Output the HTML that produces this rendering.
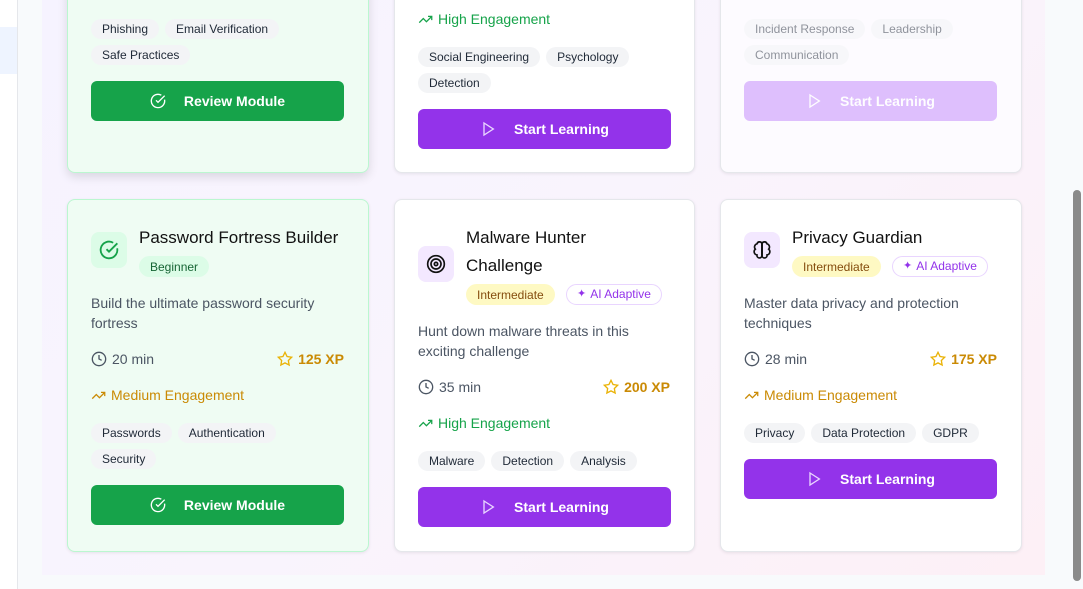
<!DOCTYPE html>
<html><head><meta charset="utf-8"><style>
*{box-sizing:border-box;margin:0;padding:0}
body{width:1083px;height:589px;overflow:hidden;background:#f8fafc;font-family:"Liberation Sans",sans-serif;position:relative;color:#111827}
.abs{position:absolute}
.side{left:0;top:0;width:18px;height:589px;background:#fff;border-right:1px solid #e5e7eb}
.wrap{left:42px;top:-20px;width:1003px;height:595px;background:linear-gradient(135deg,#f6f3ff 0%,#f9f4fd 50%,#fdf0f6 100%)}
.card{position:absolute;background:#fff;border:1px solid #e5e7eb;border-radius:8px;box-shadow:0 1px 3px rgba(0,0,0,.08)}
.green{background:#effcf3;border-color:#bbf7d0}
.t{position:absolute;white-space:nowrap;line-height:20px}
.title{font-size:17px;font-weight:500;color:#111;line-height:28px}
.desc{font-size:14px;color:#4b5563;line-height:20px;white-space:normal}
.meta{font-size:14px;color:#4b5563;display:flex;align-items:center;gap:5px}
.xp{font-size:14px;color:#ca8a04;font-weight:700;display:flex;align-items:center;gap:5px}
.eng{font-size:14px;display:flex;align-items:center;gap:5px}
.tags{position:absolute;display:flex;flex-wrap:wrap;gap:6px;width:253px}
.tag{font-size:12px;background:#f3f4f6;color:#1f2937;height:20px;line-height:21px;padding:0 11px;border-radius:10px;font-weight:500}
.btn{position:absolute;width:253px;height:40px;border-radius:6px;color:#fff;font-size:14px;font-weight:700;display:flex;align-items:center;justify-content:center;gap:18px}
.gbtn{background:#16a34a}.pbtn{background:#9333ea}
.badge{position:absolute;font-size:12px;height:21px;line-height:22px;border-radius:11px;padding:0 11px;white-space:nowrap}
.beg{background:#dcfce7;color:#166534}
.int{background:#fef9c3;color:#854d0e}
.ai{background:#fff;border:1px solid #e9d5ff;color:#9333ea;display:flex;align-items:center;gap:4px;line-height:19px;padding:0 10px}
.ico{position:absolute;width:36px;height:36px;border-radius:8px;display:flex;align-items:center;justify-content:center}
</style></head><body>
<div class="abs side"><div class="abs" style="left:0;top:27px;width:17px;height:47px;background:#eef4ff"></div></div>
<div class="abs wrap"></div>

<!-- Row 1 -->
<div class="card green" style="left:67px;top:-20px;width:302px;height:193px;box-shadow:0 4px 10px rgba(0,0,0,.12)"></div>
<div class="tags" style="left:91px;top:19px"><span class="tag">Phishing</span><span class="tag">Email Verification</span><span class="tag">Safe Practices</span></div>
<div class="btn gbtn" style="left:91px;top:81px"><svg width="16" height="16" viewBox="0 0 24 24" fill="none" stroke="#fff" stroke-width="2"><path d="M21.8 10A10 10 0 1 1 17 3.3"/><path d="M9 11l3 3L22 4"/></svg>Review Module</div>

<div class="card" style="left:394px;top:-20px;width:301px;height:193px"></div>
<div class="t eng" style="left:418px;top:9px;color:#16a34a"><svg width="15" height="15" viewBox="0 0 24 24" fill="none" stroke="#16a34a" stroke-width="2"><path d="M22 7l-8.5 8.5-5-5L2 17"/><path d="M16 7h6v6"/></svg>High Engagement</div>
<div class="tags" style="left:418px;top:47px"><span class="tag">Social Engineering</span><span class="tag">Psychology</span><span class="tag">Detection</span></div>
<div class="btn pbtn" style="left:418px;top:109px"><svg width="16" height="16" viewBox="0 0 24 24" fill="none" stroke="#e9d5ff" stroke-width="2"><path d="M6 3l14 9-14 9z"/></svg>Start Learning</div>

<div class="card" style="left:720px;top:-20px;width:302px;height:193px;background:#fdfbff"></div>
<div style="opacity:.5">
<div class="tags" style="left:744px;top:19px"><span class="tag">Incident Response</span><span class="tag">Leadership</span><span class="tag">Communication</span></div>
<div class="btn pbtn" style="left:744px;top:81px;background:#c084fc"><svg width="16" height="16" viewBox="0 0 24 24" fill="none" stroke="#fff" stroke-width="2"><path d="M6 3l14 9-14 9z"/></svg>Start Learning</div>
</div>

<!-- Row 2 col1 -->
<div class="card green" style="left:67px;top:199px;width:302px;height:353px"></div>
<div class="ico" style="left:91px;top:232px;background:#dcfce7"><svg width="20" height="20" viewBox="0 0 24 24" fill="none" stroke="#16a34a" stroke-width="2.2"><path d="M21.8 10A10 10 0 1 1 17 3.3"/><path d="M9 11l3 3L22 4"/></svg></div>
<div class="t title" style="left:139px;top:224px">Password Fortress Builder</div>
<div class="badge beg" style="left:139px;top:256px">Beginner</div>
<div class="t desc" style="left:91px;top:293px;width:253px">Build the ultimate password security fortress</div>
<div class="t meta" style="left:91px;top:349px"><svg width="16" height="16" viewBox="0 0 24 24" fill="none" stroke="#4b5563" stroke-width="2"><circle cx="12" cy="12" r="10"/><path d="M12 6v6l4 2"/></svg>20 min</div>
<div class="t xp" style="right:739px;top:349px"><svg width="16" height="16" viewBox="0 0 24 24" fill="none" stroke="#eab308" stroke-width="2"><path d="M12 2l3.1 6.3 6.9 1-5 4.9 1.2 6.8L12 17.8 5.8 21l1.2-6.8-5-4.9 6.9-1z"/></svg>125 XP</div>
<div class="t eng" style="left:91px;top:385px;color:#ca8a04"><svg width="15" height="15" viewBox="0 0 24 24" fill="none" stroke="#ca8a04" stroke-width="2"><path d="M22 7l-8.5 8.5-5-5L2 17"/><path d="M16 7h6v6"/></svg>Medium Engagement</div>
<div class="tags" style="left:91px;top:423px"><span class="tag">Passwords</span><span class="tag">Authentication</span><span class="tag">Security</span></div>
<div class="btn gbtn" style="left:91px;top:485px"><svg width="16" height="16" viewBox="0 0 24 24" fill="none" stroke="#fff" stroke-width="2"><path d="M21.8 10A10 10 0 1 1 17 3.3"/><path d="M9 11l3 3L22 4"/></svg>Review Module</div>

<!-- Row 2 col2 -->
<div class="card" style="left:394px;top:199px;width:301px;height:353px"></div>
<div class="ico" style="left:418px;top:246px;background:#f3e8ff"><svg width="20" height="20" viewBox="0 0 24 24" fill="none" stroke="#111" stroke-width="2"><circle cx="12" cy="12" r="10"/><circle cx="12" cy="12" r="6"/><circle cx="12" cy="12" r="2"/></svg></div>
<div class="t title" style="left:466px;top:224px">Malware Hunter</div>
<div class="t title" style="left:466px;top:252px">Challenge</div>
<div class="badge int" style="left:466px;top:284px">Intermediate</div>
<div class="badge ai" style="left:566px;top:284px"><span style="font-size:11px">✦</span>AI Adaptive</div>
<div class="t desc" style="left:418px;top:321px;width:230px">Hunt down malware threats in this exciting challenge</div>
<div class="t meta" style="left:418px;top:377px"><svg width="16" height="16" viewBox="0 0 24 24" fill="none" stroke="#4b5563" stroke-width="2"><circle cx="12" cy="12" r="10"/><path d="M12 6v6l4 2"/></svg>35 min</div>
<div class="t xp" style="right:413px;top:377px"><svg width="16" height="16" viewBox="0 0 24 24" fill="none" stroke="#eab308" stroke-width="2"><path d="M12 2l3.1 6.3 6.9 1-5 4.9 1.2 6.8L12 17.8 5.8 21l1.2-6.8-5-4.9 6.9-1z"/></svg>200 XP</div>
<div class="t eng" style="left:418px;top:413px;color:#16a34a"><svg width="15" height="15" viewBox="0 0 24 24" fill="none" stroke="#16a34a" stroke-width="2"><path d="M22 7l-8.5 8.5-5-5L2 17"/><path d="M16 7h6v6"/></svg>High Engagement</div>
<div class="tags" style="left:418px;top:451px"><span class="tag">Malware</span><span class="tag">Detection</span><span class="tag">Analysis</span></div>
<div class="btn pbtn" style="left:418px;top:487px"><svg width="16" height="16" viewBox="0 0 24 24" fill="none" stroke="#e9d5ff" stroke-width="2"><path d="M6 3l14 9-14 9z"/></svg>Start Learning</div>

<!-- Row 2 col3 -->
<div class="card" style="left:720px;top:199px;width:302px;height:353px"></div>
<div class="ico" style="left:744px;top:232px;background:#f3e8ff"><svg width="20" height="20" viewBox="0 0 24 24" fill="none" stroke="#111" stroke-width="2"><path d="M12 5a3 3 0 0 0-5.9-.5A4 4 0 0 0 4 11a4 4 0 0 0 2 7 3 3 0 0 0 6 1z"/><path d="M12 5a3 3 0 0 1 5.9-.5A4 4 0 0 1 20 11a4 4 0 0 1-2 7 3 3 0 0 1-6 1z"/><path d="M12 5v14"/></svg></div>
<div class="t title" style="left:792px;top:224px">Privacy Guardian</div>
<div class="badge int" style="left:792px;top:256px">Intermediate</div>
<div class="badge ai" style="left:892px;top:256px"><span style="font-size:11px">✦</span>AI Adaptive</div>
<div class="t desc" style="left:744px;top:293px;width:253px">Master data privacy and protection techniques</div>
<div class="t meta" style="left:744px;top:349px"><svg width="16" height="16" viewBox="0 0 24 24" fill="none" stroke="#4b5563" stroke-width="2"><circle cx="12" cy="12" r="10"/><path d="M12 6v6l4 2"/></svg>28 min</div>
<div class="t xp" style="right:86px;top:349px"><svg width="16" height="16" viewBox="0 0 24 24" fill="none" stroke="#eab308" stroke-width="2"><path d="M12 2l3.1 6.3 6.9 1-5 4.9 1.2 6.8L12 17.8 5.8 21l1.2-6.8-5-4.9 6.9-1z"/></svg>175 XP</div>
<div class="t eng" style="left:744px;top:385px;color:#ca8a04"><svg width="15" height="15" viewBox="0 0 24 24" fill="none" stroke="#ca8a04" stroke-width="2"><path d="M22 7l-8.5 8.5-5-5L2 17"/><path d="M16 7h6v6"/></svg>Medium Engagement</div>
<div class="tags" style="left:744px;top:423px"><span class="tag">Privacy</span><span class="tag">Data Protection</span><span class="tag">GDPR</span></div>
<div class="btn pbtn" style="left:744px;top:459px"><svg width="16" height="16" viewBox="0 0 24 24" fill="none" stroke="#e9d5ff" stroke-width="2"><path d="M6 3l14 9-14 9z"/></svg>Start Learning</div>

<!-- scrollbar -->
<div class="abs" style="left:1068px;top:0;width:15px;height:589px;background:#f8fafc"></div>
<div class="abs" style="left:1073px;top:190px;width:8px;height:391px;background:#8a8a8a;border-radius:4px"></div>
</body></html>
